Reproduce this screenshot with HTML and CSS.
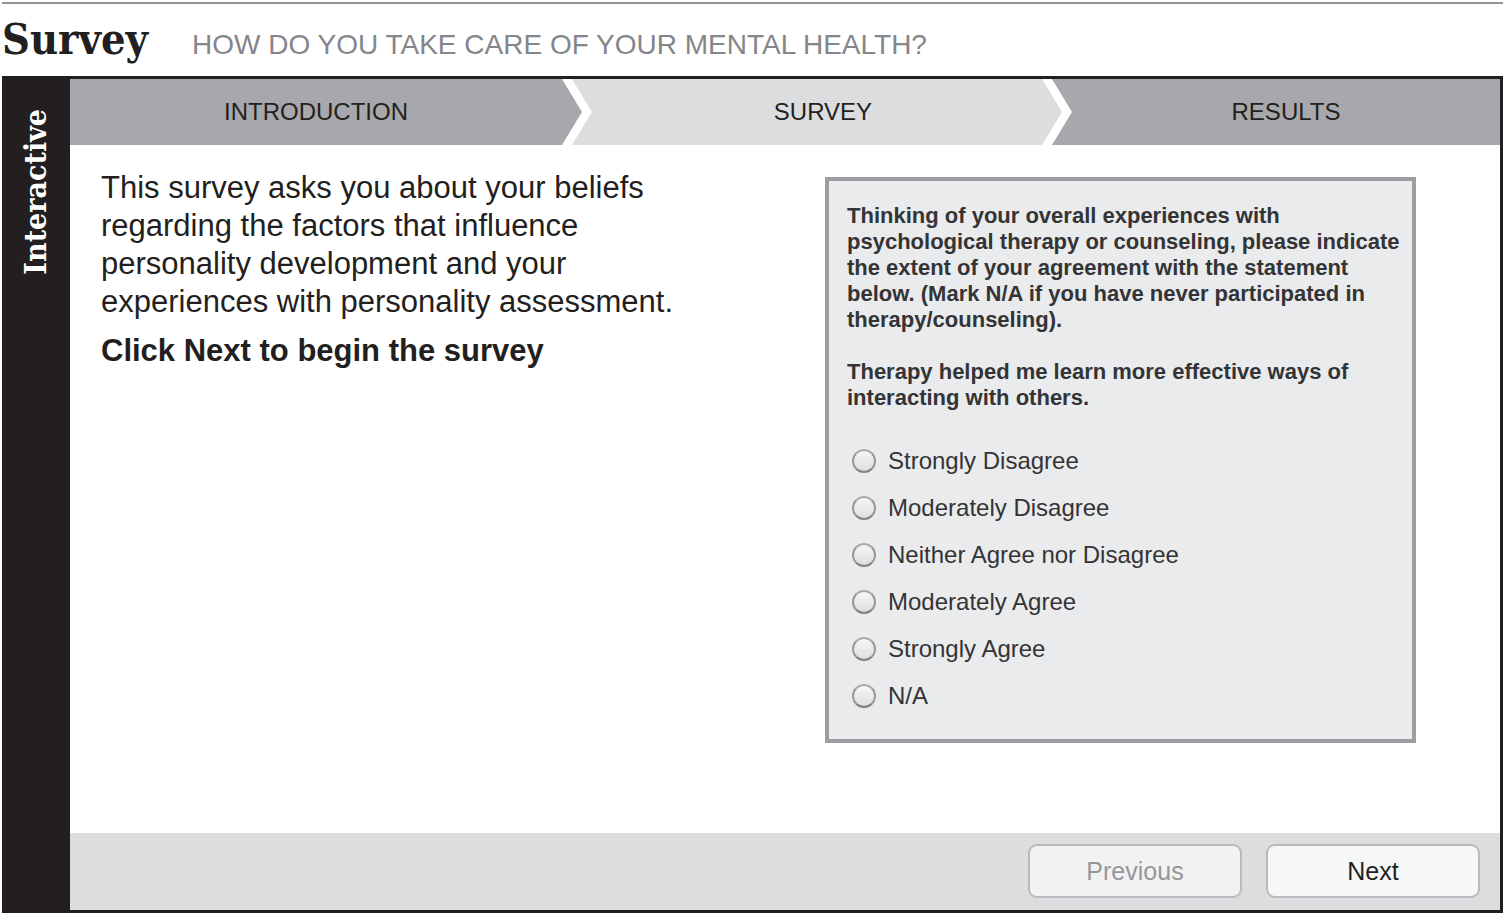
FILE: index.html
```
<!DOCTYPE html>
<html lang="en">
<head>
<meta charset="utf-8">
<title>Survey: How do you take care of your mental health?</title>
<link rel="stylesheet" href="styles.css">
</head>
<body>
<header class="page-header">
  <h1 class="page-title">Survey</h1>
  <p class="page-subtitle">HOW DO YOU TAKE CARE OF YOUR MENTAL HEALTH?</p>
</header>
<div class="frame">
  <aside class="rail"><span class="rail-label">Interactive</span></aside>
  <div class="panel">
    <ol class="steps">
      <li class="step step-intro">INTRODUCTION</li>
      <li class="step step-survey" aria-current="step">SURVEY</li>
      <li class="step step-results">RESULTS</li>
    </ol>
    <main class="content">
      <section class="intro">
        <p class="intro-text">This survey asks you about your beliefs regarding the factors that influence personality development and your experiences with personality assessment.</p>
        <p class="intro-action">Click Next to begin the survey</p>
      </section>
      <fieldset class="card">
        <legend class="question">
          <span class="question-part">Thinking of your overall experiences with psychological therapy or counseling, please indicate the extent of your agreement with the statement below. (Mark N/A if you have never participated in therapy/counseling).</span>
          <span class="question-part">Therapy helped me learn more effective ways of interacting with others.</span>
        </legend>
        <div class="options">
          <label class="option"><input class="radio" type="radio" name="answer"><span>Strongly Disagree</span></label>
          <label class="option"><input class="radio" type="radio" name="answer"><span>Moderately Disagree</span></label>
          <label class="option"><input class="radio" type="radio" name="answer"><span>Neither Agree nor Disagree</span></label>
          <label class="option"><input class="radio" type="radio" name="answer"><span>Moderately Agree</span></label>
          <label class="option"><input class="radio" type="radio" name="answer"><span>Strongly Agree</span></label>
          <label class="option"><input class="radio" type="radio" name="answer"><span>N/A</span></label>
        </div>
      </fieldset>
    </main>
    <footer class="actions">
      <button class="button" type="button" disabled>Previous</button>
      <button class="button" type="button">Next</button>
    </footer>
  </div>
</div>
</body>
</html>
```
FILE: styles.css
```
* {
  box-sizing: border-box;
}

body {
  display: flex;
  flex-direction: column;
  min-height: 100vh;
  margin: 0;
  padding: 2px;
  background: #fff;
  color: #231f20;
  font-family: "Liberation Sans", Arial, sans-serif;
}

h1, p, ol {
  margin: 0;
  padding: 0;
}

.page-header {
  display: flex;
  align-items: baseline;
  gap: 44px;
  height: 74px;
  padding-top: 11px;
  border-top: 2px solid #939498;
}

.page-title {
  font-family: "DejaVu Serif Condensed", "DejaVu Serif", serif;
  font-size: 43px;
  font-weight: bold;
  line-height: 48px;
}

.page-subtitle {
  color: #85868a;
  font-size: 28px;
  line-height: 40px;
}

.frame {
  display: flex;
  flex: 1;
  border: 3px solid #231f20;
  border-left: 0;
}

.rail {
  display: flex;
  flex: none;
  justify-content: center;
  width: 68px;
  padding-top: 30px;
  background: #231f20;
}

.rail-label {
  align-self: flex-start;
  color: #fff;
  font-family: "DejaVu Serif Condensed", "DejaVu Serif", serif;
  font-size: 30px;
  font-weight: bold;
  line-height: 36px;
  writing-mode: vertical-rl;
  transform: rotate(180deg);
}

.panel {
  display: flex;
  flex: 1;
  flex-direction: column;
  min-width: 0;
}

.steps {
  display: grid;
  grid-template-columns: 502fr 480fr 448fr;
  height: 66px;
  list-style: none;
}

.step {
  display: flex;
  align-items: center;
  justify-content: center;
  background: #a7a8ab;
  font-size: 24px;
  line-height: 32px;
}

.step-intro {
  margin-right: -10px;
  padding-right: 20px;
  clip-path: polygon(0 0, calc(100% - 20px) 0, 100% 50%, calc(100% - 20px) 100%, 0 100%);
}

.step-survey {
  margin-right: -10px;
  padding-left: 12px;
  background: #dcddde;
  clip-path: polygon(0 0, calc(100% - 20px) 0, 100% 50%, calc(100% - 20px) 100%, 0 100%, 20px 50%);
}

.step-results {
  padding-left: 20px;
  clip-path: polygon(0 0, 100% 0, 100% 100%, 0 100%, 20px 50%);
}

.content {
  display: flex;
  flex: 1;
  align-items: flex-start;
  justify-content: space-between;
  padding: 32px 84px 32px 31px;
}

.intro {
  flex: 0 1 600px;
  margin-top: -8px;
}

.intro-text {
  font-size: 31px;
  line-height: 38px;
}

.intro-action {
  padding-top: 11px;
  font-size: 31px;
  font-weight: bold;
  line-height: 38px;
}

.card {
  flex: 0 1 591px;
  min-width: 0;
  margin: 0;
  padding: 22px 6px 20px 18px;
  border: 4px solid #9c9da1;
  background: #eaebec;
  color: #343436;
}

.question {
  float: left;
  width: 100%;
  padding: 0;
  font-size: 22px;
  font-weight: bold;
  line-height: 26px;
}

.question-part {
  display: block;
}

.question-part + .question-part {
  padding-top: 26px;
}

.options {
  clear: both;
  padding-top: 26px;
}

.option {
  display: flex;
  align-items: center;
  gap: 12px;
  height: 47px;
  padding-left: 5px;
  font-size: 24px;
}

.radio {
  width: 24px;
  height: 24px;
  margin: 0;
  border: 2px solid #8f9093;
  border-color: #a9aaad #98999c #808184;
  border-radius: 50%;
  background: linear-gradient(#f6f6f7, #dedfe1);
  appearance: none;
}

.radio:checked {
  box-shadow: inset 0 0 0 5px #eaebec;
  background: #343436;
}

.actions {
  display: flex;
  justify-content: flex-end;
  gap: 24px;
  padding: 11px 20px 12px;
  background: #dcddde;
}

.button {
  width: 214px;
  height: 54px;
  border: 2px solid #b9babd;
  border-radius: 9px;
  background: #f6f8f8;
  color: #231f20;
  font: 25px/32px "Liberation Sans", Arial, sans-serif;
}

.button:disabled {
  background: #f2f2f2;
  color: #96979a;
}
```
